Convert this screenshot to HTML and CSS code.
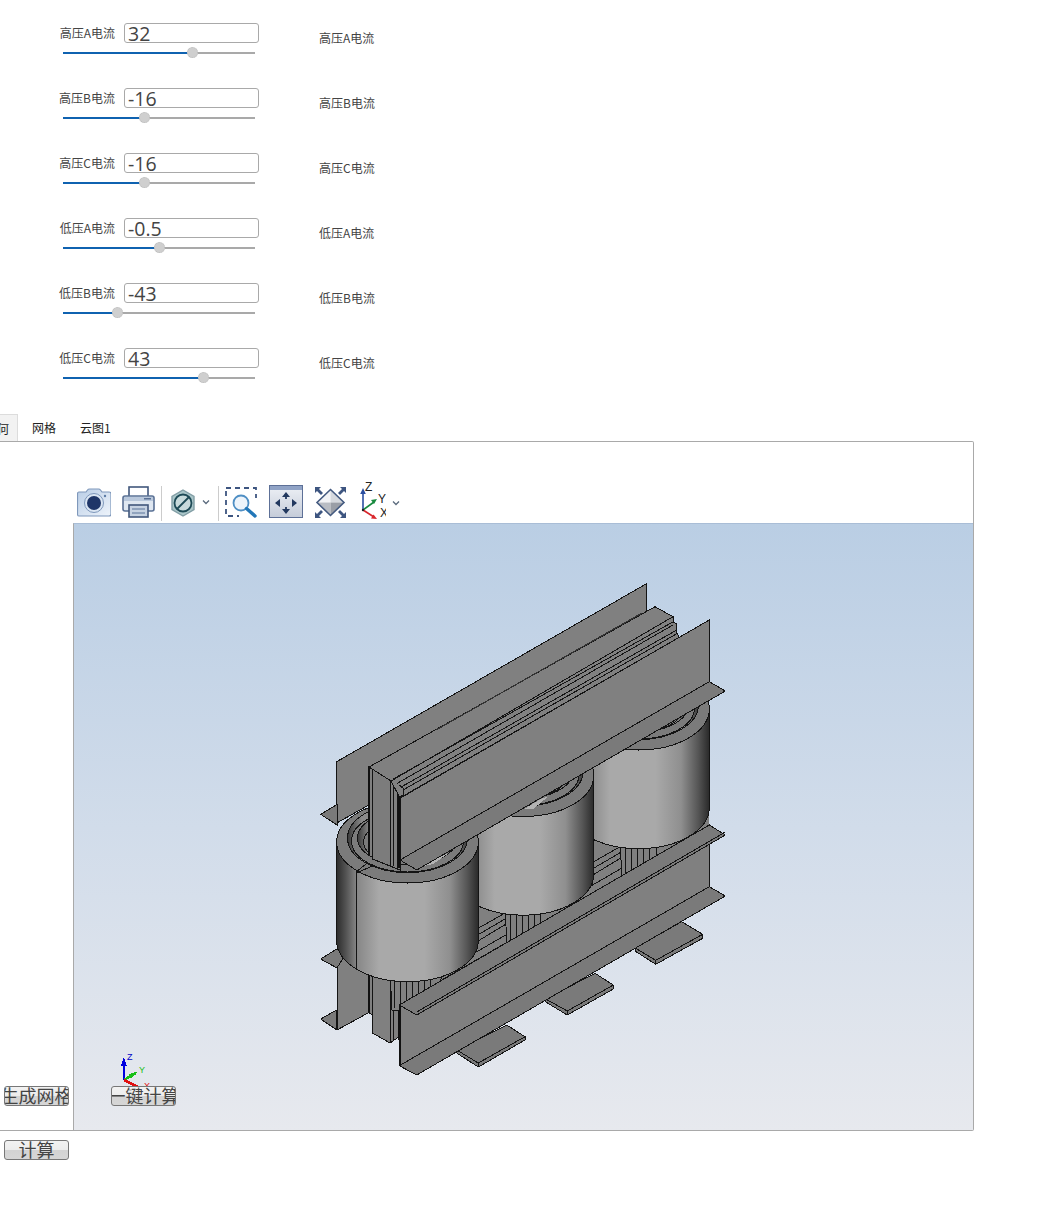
FILE: index.html
```html
<!DOCTYPE html>
<html lang="zh">
<head>
<meta charset="utf-8">
<title>变压器</title>
<link rel="stylesheet" href="styles.css">
</head>
<body>
<section class="rows">
  <div class="row"><div class="ctl"><div class="line"><label class="lbl">高压A电流</label><input class="num" value="32"></div><div class="slider"><div class="fill" style="width:129px"></div><div class="thumb" style="left:129px"></div></div></div><div class="out">高压A电流</div></div>
  <div class="row"><div class="ctl"><div class="line"><label class="lbl">高压B电流</label><input class="num" value="-16"></div><div class="slider"><div class="fill" style="width:81px"></div><div class="thumb" style="left:81px"></div></div></div><div class="out">高压B电流</div></div>
  <div class="row"><div class="ctl"><div class="line"><label class="lbl">高压C电流</label><input class="num" value="-16"></div><div class="slider"><div class="fill" style="width:81px"></div><div class="thumb" style="left:81px"></div></div></div><div class="out">高压C电流</div></div>
  <div class="row"><div class="ctl"><div class="line"><label class="lbl">低压A电流</label><input class="num" value="-0.5"></div><div class="slider"><div class="fill" style="width:96px"></div><div class="thumb" style="left:96px"></div></div></div><div class="out">低压A电流</div></div>
  <div class="row"><div class="ctl"><div class="line"><label class="lbl">低压B电流</label><input class="num" value="-43"></div><div class="slider"><div class="fill" style="width:54px"></div><div class="thumb" style="left:54px"></div></div></div><div class="out">低压B电流</div></div>
  <div class="row"><div class="ctl"><div class="line"><label class="lbl">低压C电流</label><input class="num" value="43"></div><div class="slider"><div class="fill" style="width:140px"></div><div class="thumb" style="left:140px"></div></div></div><div class="out">低压C电流</div></div>
</section>

<nav class="tabs">
  <div class="tab tab-active">几何</div>
  <div class="tab">网格</div>
  <div class="tab">云图1</div>
</nav>

<section class="panel">
  <div class="toolbar">
    <svg class="ic i-cam" viewBox="0 0 34 30"><defs><linearGradient id="gc" x1="0" y1="0" x2="1" y2="1"><stop offset="0" stop-color="#b9cde6"/><stop offset="1" stop-color="#eef4fb"/></linearGradient></defs><path d="M2 4h7l1.500-2q.6-1 2-1h9q1.400 0 2 1l1.500 2h7q2 0 2 2v20q0 2-2 2H2q-1.500 0-1.500-2V6Q.5 4 2 4z" fill="url(#gc)" stroke="#7f98bb" stroke-width="1.200"/><circle cx="17" cy="15" r="9.500" fill="#dbe6f3" stroke="#7f98bb"/><circle cx="17" cy="15" r="7" fill="#1f3668"/><circle cx="28" cy="8" r="1.200" fill="#5d7ba6"/></svg>
    <svg class="ic i-print" viewBox="0 0 33 32"><rect x="7" y="1" width="19" height="11" fill="#fff" stroke="#41577c" stroke-width="1.600"/><rect x="1" y="10" width="31" height="15" rx="2" fill="#dfe7f1" stroke="#5a7195" stroke-width="1.600"/><rect x="2" y="11" width="29" height="4" fill="#b9c8dc"/><rect x="22" y="12" width="7" height="1.500" fill="#5a7195"/><rect x="7" y="19" width="19" height="12" fill="#c6d2e2" stroke="#41577c" stroke-width="1.600"/><path d="M10 23h13M10 27h13" stroke="#7f94b3" stroke-width="1.500"/></svg>
    <div class="sep sep-a"></div>
    <svg class="ic i-hex" viewBox="0 0 24 28"><path d="M12 1l11 6.500v13L12 27 1 20.500v-13z" fill="#aac6c9" stroke="#829ea5" stroke-width="1.400"/><circle cx="12" cy="14" r="8.500" fill="#c7dadb" stroke="#1d4a56" stroke-width="1.800"/><path d="M6 20L18 8" stroke="#1d4a56" stroke-width="1.800"/></svg>
    <svg class="ic i-chev" viewBox="0 0 10 10"><path d="M2 3.500L5 6.500 8 3.500" fill="none" stroke="#5a6a7d" stroke-width="1.300"/></svg>
    <div class="sep sep-b"></div>
    <svg class="ic i-zoom" viewBox="0 0 33 32"><rect x="1" y="2" width="30" height="28" fill="none" stroke="#3d5580" stroke-width="1.800" stroke-dasharray="5 4"/><rect x="14" y="22" width="19" height="10" fill="#fff"/><rect x="26" y="12" width="7" height="12" fill="#fff"/><circle cx="16" cy="17" r="7.500" fill="#edf4fb" stroke="#4f8fc4" stroke-width="1.800"/><path d="M21.500 22.500L30 30" stroke="#2277b8" stroke-width="3.400" stroke-linecap="round"/></svg>
    <svg class="ic i-fit" viewBox="0 0 34 33"><defs><linearGradient id="gf" x1="0" y1="0" x2="0" y2="1"><stop offset="0" stop-color="#eef1f6"/><stop offset="1" stop-color="#c5ccd9"/></linearGradient></defs><rect x=".5" y=".5" width="33" height="32" fill="url(#gf)" stroke="#5d7097"/><rect x="1" y="1" width="32" height="4" fill="#90a3c6"/><path d="M17 10v4M17 22v4M7 18h4M23 18h4" stroke="#23395f" stroke-width="1.800"/><path d="M17 7l-4 5h8zM17 29l-4-5h8zM6 18l5-4v8zM28 18l-5-4v8z" fill="#23395f"/></svg>
    <svg class="ic i-iso" viewBox="0 0 33 33"><path d="M16.500 3.500V16.500H3z" fill="#f2f3f6"/><path d="M16.500 3.500L30 16.500H16.500z" fill="#d6d9de"/><path d="M3 16.500h13.500v13z" fill="#b9bdc4"/><path d="M16.500 16.500H30L16.500 29.500z" fill="#9a9ea6"/><path d="M16.500 3.500L30 16.500 16.500 29.500 3 16.500z" fill="none" stroke="#445a80" stroke-width="1.600"/><path d="M1 1h6l-2 2 4 4-2 2-4-4-2 2zM32 1h-6l2 2-4 4 2 2 4-4 2 2zM1 32h6l-2-2 4-4-2-2-4 4-2-2zM32 32h-6l2-2-4-4 2-2 4 4 2-2z" fill="#3d5580"/></svg>
    <svg class="ic i-axis" viewBox="0 -4 26 38"><path d="M3 24V6" stroke="#2b4fa0" stroke-width="1.600"/><path d="M3 2L.2 8h5.600z" fill="#2b4fa0"/><path d="M3 24l11-8" stroke="#188a3f" stroke-width="1.600"/><path d="M17 13l-6 1 3 4z" fill="#188a3f"/><path d="M3 24l11 7" stroke="#d9262c" stroke-width="1.600"/><path d="M17 33l-6-.5 2.500-4z" fill="#d9262c"/><circle cx="3" cy="24" r="1.200" fill="#222"/><text class="axtxt" x="5" y="5">Z</text><text class="axtxt" x="18" y="17">Y</text><text class="axtxt" x="20" y="31">X</text></svg>
    <svg class="ic i-chev2" viewBox="0 0 10 10"><path d="M2 3.500L5 6.500 8 3.500" fill="none" stroke="#5a6a7d" stroke-width="1.300"/></svg>
  </div>

  <div class="viewer">
    <svg class="scene" viewBox="74 524 899 606">
      <defs>
        <linearGradient id="cyl" x1="0" y1="0" x2="1" y2="0">
          <stop offset="0" stop-color="#2c2c2c"/><stop offset=".06" stop-color="#505050"/><stop offset=".14" stop-color="#868686"/><stop offset=".3" stop-color="#a9a9a9"/><stop offset=".62" stop-color="#a9a9a9"/><stop offset=".8" stop-color="#8f8f8f"/><stop offset=".92" stop-color="#565656"/><stop offset="1" stop-color="#2a2a2a"/>
        </linearGradient>
        <linearGradient id="wall" x1="0" y1="0" x2="1" y2="0">
          <stop offset="0" stop-color="#3a3a3a"/><stop offset=".12" stop-color="#8a8a8a"/><stop offset=".88" stop-color="#8a8a8a"/><stop offset="1" stop-color="#3a3a3a"/>
        </linearGradient>
        <g id="coil">
          <path class="s body" d="M336.700 842V940.700A70.800 41 0 0 0 478.300 940.700V842z"/>
          <ellipse class="s top" cx="407.500" cy="842" rx="70.800" ry="41"/>
          <ellipse class="s wl" cx="407.500" cy="838" rx="60" ry="34.600"/>
          <ellipse class="s top" cx="407.500" cy="841" rx="56" ry="31"/>
          <ellipse class="s wl" cx="407.500" cy="838" rx="50" ry="27"/>
          <ellipse class="s top" cx="407.500" cy="842" rx="44" ry="23"/>
        </g>
        <g id="steps">
          <path class="s ln" d="M478.300 906.700L505 913L440 950"/>
          <path class="s ln" d="M440 957L506.700 918M440 964L510 921.700M440 973L520 926.700M440 981L530 929"/>
        </g>
      </defs>

      <!-- back frame -->
      <polygon class="s pl" points="336.700,761.700 646,584 646,650 336.700,823"/>
      <polygon class="s fl" points="320.700,814.300 337,804.500 337,825"/>
      <polygon class="s pl" points="337,960 368,942 368,1013 337,1030"/>
      <polygon class="s fl" points="320.700,959 336.700,949 345,955 337,968"/>
      <polygon class="s fl" points="320.700,1019 336.700,1010 337,1030"/>

      <!-- lower core column and yoke -->
      <polygon class="s pl" points="368,960 400,960 400,1036 390,1043 372.500,1033 372.500,1015 368,1012"/>
      <path class="s ln" d="M390 960V1043M393 960V1041M372.500 960V1033"/>
      <path class="th" d="M368.500 960V1012M398.500 960V1040"/>
      <polygon class="pl" points="400,950 709,771 709,830 430,1015"/>
      <use href="#steps"/>
      <use href="#steps" transform="translate(115.500 -66.500)"/>
      <g class="s ln">
        <polygon class="pl" points="390,970 445,970 432,1000 405,1010 392,1010"/>
        <path d="M394 975V1008M400 975V1008M406 975V1006M412 975V1004M418 975V1000M424 975V997M430 975V994"/>
      </g>
      <g class="s ln">
        <polygon class="pl" points="505,908 540,908 540,932 520,944 507,944"/>
        <path d="M510 908V942M516 908V942M522 908V940M528 908V937M534 908V934"/>
      </g>
      <g class="s ln">
        <polygon class="pl" points="620,841 656,841 656,866 635,878 622,878"/>
        <path d="M625 842V876M631 842V876M637 842V874M643 842V871M649 842V868"/>
      </g>

      <!-- coils, back to front -->
      <use href="#coil" transform="translate(231 -133)"/>
      <use href="#coil" transform="translate(115.500 -66.500)"/>
      <use href="#coil"/>
      <path class="s ln" d="M356.700 872V968M356 872L366 864M357 873L372 866"/>

      <!-- upper core column -->
      <polygon class="s pl" points="368.300,766 400,785 400,870 390,866 368.300,855"/>
      <polygon class="s sd" points="372.500,769 390,780 390,866 372.500,859"/>
      <path class="s ln" d="M393 778V866M397 784V868"/>
      <path class="th" d="M369 767V855M398.800 786V868"/>

      <!-- top yoke, stepped -->
      <polygon class="s pl" points="369,767 655,606.700 673,616.700 673,622 676.700,624 676.700,632 680,640 400,798 391,781"/>
      <path class="th1" d="M436 730L642 613"/>
      <path class="s ln" d="M391 781L673 616.700M392.700 779.300L673.300 621.700M397.300 783.300L673 625M401.700 786.700L676.700 630M403 790L678 633M406.700 794L678 638M399 785L403 788L404 794L399 798"/>

      <!-- front upper plate -->
      <polygon class="s pl" points="400,798.300 709.300,620 709.300,681.700 400,860"/>
      <polygon class="lt" points="424,866 441,856 449,853 433,864"/>
      <polygon class="lt" points="524,809 541,799 549,796 533,809"/>
      <polygon class="s fl" points="400,860 709.300,681.700 725.300,691 416.700,870"/>

      <!-- feet -->
      <path class="s fl" d="M681.700 921.700L702.700 934.300V938.300L655.700 964.300L635 951V948z"/>
      <path class="s ln" d="M655.700 960.300L702.700 934.300M655.700 960.300V964.300M655.700 960.300L635 948"/>
      <path class="s fl" d="M595 973.300L613.300 985V989L567.300 1015L545.700 1002V999z"/>
      <path class="s ln" d="M567.300 1011L613.300 985M567.300 1011V1015M567.300 1011L545.700 999"/>
      <path class="s fl" d="M506.700 1025L525 1036.700V1040L478.300 1067L456.700 1053V1050z"/>
      <path class="s ln" d="M478.300 1063L525 1036.700M478.300 1063V1067M478.300 1063L456.700 1050"/>

      <!-- front lower beam -->
      <polygon class="s pl" points="399.300,1005 709.300,825 709.300,886.700 399.300,1065.700"/>
      <polygon class="s fl" points="399.300,1065.700 709.300,886.700 725.300,896 416.700,1075"/>
      <polygon class="s fl" points="399.300,1005 709.300,825 725.300,835 416.700,1015"/>
      <path class="th" d="M399.800 1006V1065"/>
      <path class="s ln" d="M416.700 1012L725.300 832"/>

      <!-- triad -->
      <path class="axb" d="M124 1080V1060"/><polygon class="fb" points="124,1057 121,1066 127,1066"/>
      <path class="axg" d="M124 1080L136 1073"/>
      <polygon class="fg" points="138,1071.500 129,1074 131,1078"/>
      <path class="axr" d="M124 1080L138 1087"/>
      <text class="tz" x="127" y="1060">Z</text>
      <text class="ty" x="139" y="1073">Y</text>
      <text class="tx" x="144" y="1089">X</text>
    </svg>
  </div>

  <button class="btn btn-mesh" type="button"><span>生成网格</span></button>
  <button class="btn btn-run" type="button"><span>一键计算</span></button>
</section>

<div class="foot"><button class="btn" type="button"><span>计算</span></button></div>
</body>
</html>
```
FILE: styles.css
```css
* { box-sizing: border-box; }
html, body { margin: 0; padding: 0; background: #fff; }
body {
  width: 1045px;
  height: 1213px;
  overflow: hidden;
  font-family: "Noto Sans CJK SC", "Liberation Sans", sans-serif;
  color: #444;
  position: relative;
}

.rows { padding: 23px 0 1px; }
.row { height: 65px; display: flex; align-items: flex-start; }
.ctl { width: 200px; margin-left: 59px; }
.line { display: flex; height: 20px; }
.lbl { width: 56px; margin-right: 9px; font-size: 12px; line-height: 19px; white-space: nowrap; text-align: right; color: #444; }
.num {
  width: 135px; height: 20px; padding: 0 0 0 3px;
  border: 1px solid #a9a9a9; border-radius: 3px;
  font: 19.500px/16px "Open Sans", "Liberation Sans", sans-serif;
  color: #444; background: #fff; outline: none;
}
.slider { position: relative; width: 192px; height: 2px; margin: 9px 0 0 4px; background: #a9a9a9; }
.fill { height: 2px; background: #0f62b0; }
.thumb { position: absolute; top: -5px; width: 11px; height: 11px; margin-left: -5px; border-radius: 50%; background: #cfcfcf; border: 1px dotted #bbb; }
.out { margin: 6px 0 0 60px; font-size: 12px; line-height: 18px; color: #444; white-space: nowrap; }

.tabs { display: flex; height: 27px; margin-left: -28px; font-size: 12px; color: #222; }
.tab { padding: 6px 10px 0 14px; line-height: 16px; }
.tab-active { width: 46px; padding: 6px 10px 0 12px; background: #f2f2f2; border: 1px solid #dcdcdc; border-bottom: 0; white-space: nowrap; }

.panel {
  position: relative;
  width: 974px; height: 690px;
  border: 1px solid #a9a9a9; border-left: 0;
  border-radius: 0 2px 2px 0;
}
.toolbar { display: flex; align-items: flex-start; height: 81px; padding: 44px 0 0 77px; }
.ic { display: block; flex: none; }
.i-cam { width: 34px; height: 30px; margin-top: 2px; }
.i-print { width: 33px; height: 32px; margin: 0 0 0 11px; }
.sep { width: 1px; height: 35px; flex: none; background: #ccc; }
.sep-a { margin-left: 6px; }
.i-hex { width: 24px; height: 28px; margin: 3px 0 0 9px; }
.i-chev { width: 10px; height: 10px; margin: 11px 0 0 6px; }
.sep-b { margin-left: 7px; }
.i-zoom { width: 33px; height: 32px; margin-left: 6px; }
.i-fit { width: 34px; height: 33px; margin: -1px 0 0 11px; }
.i-iso { width: 33px; height: 33px; margin: 0 0 0 11px; }
.i-axis { width: 26px; height: 38px; margin: -4px 0 0 13px; }
.i-chev2 { width: 10px; height: 10px; margin: 12px 0 0 5px; }
.axtxt { font: 12px "Liberation Sans", sans-serif; fill: #222; }

.viewer {
  width: 900px; height: 607px; margin-left: 73px;
  border-left: 1px solid #a9a9a9; border-top: 1px solid #a9bdd6;
  background: linear-gradient(180deg, #bacee4 0%, #d1dcea 50%, #e7e9ee 100%);
}
.scene { display: block; width: 899px; height: 606px; shape-rendering: crispEdges; }
.s { stroke: #141414; stroke-width: 1; }
.ln { fill: none; }
.body { fill: url(#cyl); }
.wl { fill: url(#wall); }
.pl { fill: #808080; }
.fl { fill: #7a7a7a; }
.sd { fill: #7c7c7c; }
.top { fill: #7b7b7b; }
.lt { fill: #b4b4b4; }
.th { stroke: #111; stroke-width: 2; fill: none; }
.th1 { stroke: #333; stroke-width: 1.200; fill: none; }
.axb { stroke: #0000e0; stroke-width: 2.500; }
.axg { stroke: #18c018; stroke-width: 2.500; }
.axr { stroke: #e01010; stroke-width: 2.500; }
.fb { fill: #0000e0; }
.fg { fill: #18c018; }
.tz { font: 9px "Liberation Sans", sans-serif; fill: #0000c8; }
.ty { font: 9px "Liberation Sans", sans-serif; fill: #18c018; }
.tx { font: 9px "Liberation Sans", sans-serif; fill: #e01010; }

.btn {
  display: flex; justify-content: center; align-items: center;
  width: 65px; height: 20px; padding: 0 0 2px; overflow: hidden;
  border: 1px solid #777; border-radius: 3px;
  background: linear-gradient(180deg, #f2f2f2 0%, #ececec 50%, #d3d3d3 52%, #d6d6d6 100%);
  font: 18px/20px "Noto Sans CJK SC", sans-serif;
  color: #444;
}
.btn span { flex: none; white-space: nowrap; }
.btn-mesh { position: absolute; left: 4px; top: 644px; }
.btn-run { position: absolute; left: 111px; top: 644px; }
.foot { padding: 9px 0 0 4px; }
```
